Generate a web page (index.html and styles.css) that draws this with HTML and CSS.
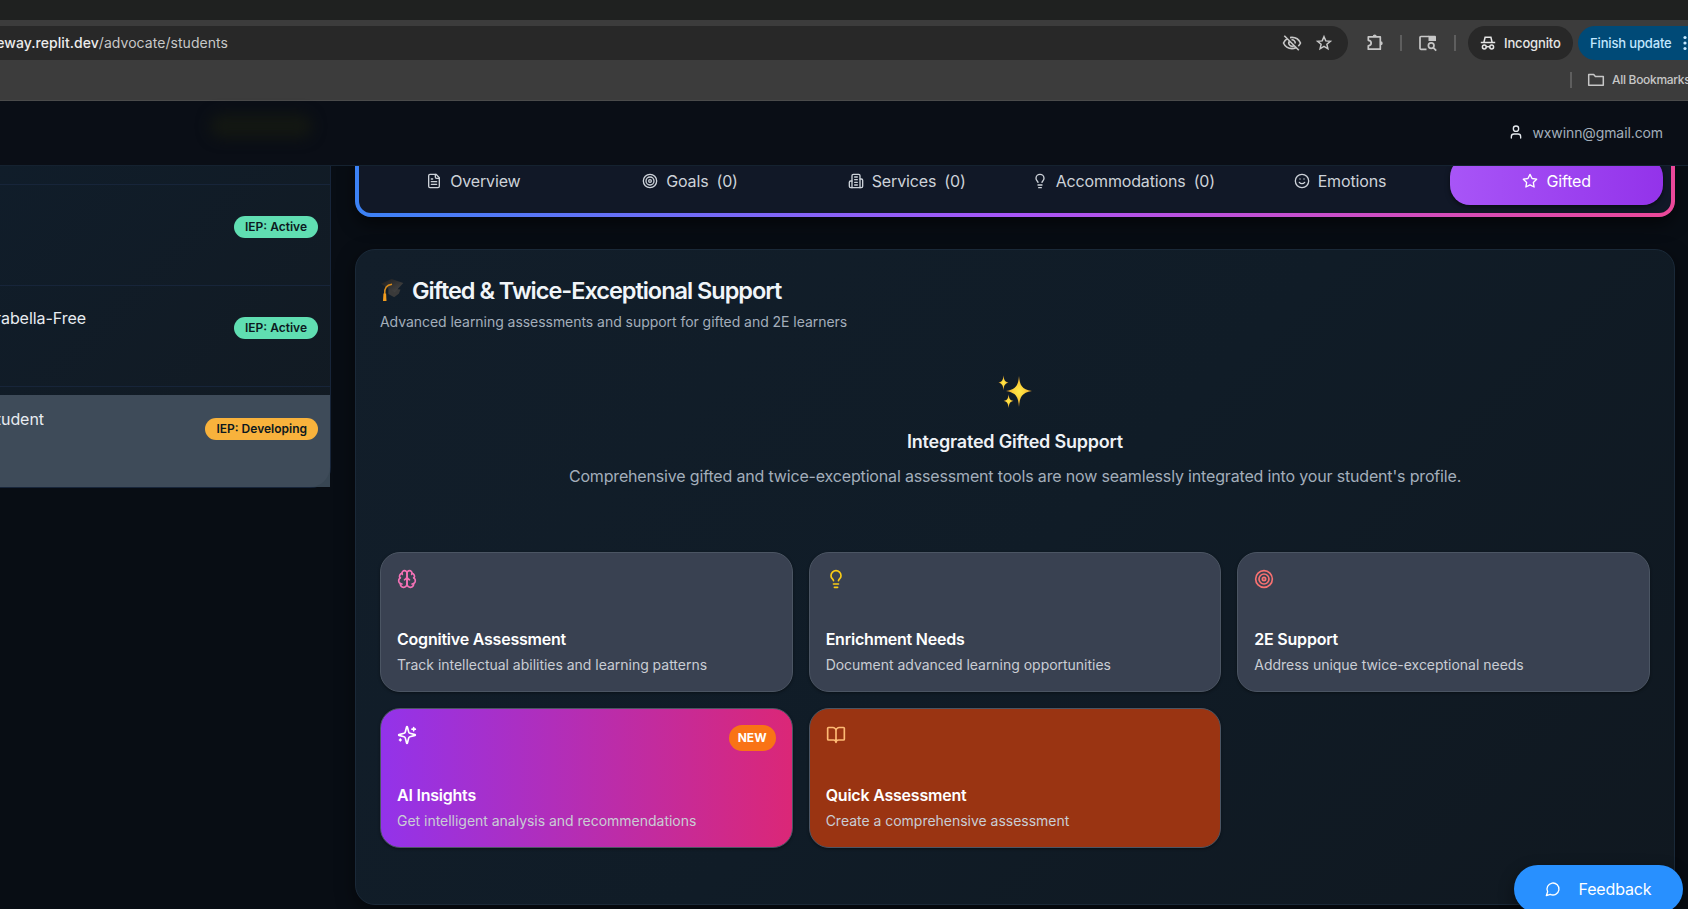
FILE: index.html
```html
<!DOCTYPE html>
<html lang="en">
<head>
<meta charset="utf-8">
<title>Students</title>
<link rel="stylesheet" href="styles.css">
</head>
<body>
<div class="tabstrip"></div>
<div class="chrome">
  <div class="toolbar">
    <div class="omnibox">
      <div class="url"><span><b>neway.replit.dev</b>/advocate/students</span></div>
      <div class="omni-icons">
        <svg width="20" height="20" viewBox="0 0 20 20" fill="none" stroke="#c7c7c7" stroke-width="1.6"><path d="M5.6 5.4C3.8 6.5 2.3 8.100 1.500 10c1.500 3.400 4.700 5.600 8.500 5.600 1.400 0 2.700-.3 3.900-.8M8 4.600c.6-.1 1.300-.2 2-.2 3.800 0 7 2.200 8.500 5.600-.5 1.200-1.200 2.200-2.200 3.100M2.300 2.700l14.500 14.500M7.400 8a3.300 3.300 0 0 0 4.600 4.600M9.500 6.800a3.300 3.300 0 0 1 3.700 3.700"/></svg>
        <svg width="18" height="18" viewBox="0 0 18 18" fill="none" stroke="#c7c7c7" stroke-width="1.500"><path d="M9 2.700l1.800 4.200 4.600.4-3.500 3 1 4.500L9 12.400l-3.900 2.400 1-4.500-3.500-3 4.600-.4z"/></svg>
      </div>
    </div>
    <svg class="puzzle" width="20" height="20" viewBox="0 0 20 20" fill="none" stroke="#c7c7c7" stroke-width="1.700"><path d="M3.300 3.900h12v12.300h-12v-3.400c2-.2 2.900-1.200 2.900-2.700S5.300 7.500 3.300 7.300z" stroke-linejoin="round"/><path d="M7.700 3.500a2 2 0 0 1 4 0zM15.700 8.200a2 2 0 0 1 0 4z" fill="#c7c7c7" stroke="none"/></svg>
    <i class="sep s1"></i>
    <svg class="tabsearch" width="20" height="20" viewBox="0 0 20 20" fill="none" stroke="#c7c7c7" stroke-width="1.700"><path d="M8.500 16.300H3a1 1 0 0 1-1-1V4.500a1 1 0 0 1 1-1h8"/><path d="M10.500 2.700H17a1 1 0 0 1 1 1v4.200h-7.500z" fill="#c7c7c7" stroke="none"/><circle cx="13.200" cy="12.600" r="2.800"/><path d="M15.200 14.600l3 3"/></svg>
    <i class="sep s2"></i>
    <div class="incog">
      <svg width="16" height="16" viewBox="0 0 16 16" fill="none" stroke="#e6e6e6" stroke-width="1.500"><path d="M.8 7.600h14.400M3.900 7.200l1.200-5h5.800l1.200 5"/><circle cx="4.300" cy="12" r="1.900"/><circle cx="11.700" cy="12" r="1.900"/><path d="M6.200 11.700h3.600"/></svg>
      <span>Incognito</span>
    </div>
    <div class="update"><span>Finish update</span><svg width="4" height="16" viewBox="0 0 4 16" fill="#c2e7ff"><circle cx="2" cy="2.500" r="1.600"/><circle cx="2" cy="8" r="1.600"/><circle cx="2" cy="13.500" r="1.600"/></svg></div>
  </div>
  <div class="bookmarks">
    <i class="sep"></i>
    <svg width="18" height="14" viewBox="0 0 18 14" fill="none" stroke="#c7c7c7" stroke-width="1.500"><path d="M1.700 1.500h5l1.700 1.900h7.900v8.900H1.700z" stroke-linejoin="round"/></svg>
    <span>All Bookmarks</span>
  </div>
</div>

<header class="apphead">
  <i class="glow"></i>
  <svg class="lc user" width="16" height="16" viewBox="0 0 24 24"><path d="M19 21v-2a4 4 0 0 0-4-4H9a4 4 0 0 0-4 4v2"/><circle cx="12" cy="7" r="4"/></svg>
  <span>wxwinn@gmail.com</span>
</header>

<div class="app">
  <aside class="side">
    <ul class="students">
      <li><div class="row"><span class="name"></span><span class="badge">IEP: Active</span></div></li>
      <li><div class="row"><span class="name n1">rabella-Free</span><span class="badge">IEP: Active</span></div></li>
      <li><div class="row on"><span class="name n2">tudent</span><span class="badge dev">IEP: Developing</span></div></li>
    </ul>
  </aside>

  <main class="main">
    <nav class="tabs"><div class="tabs-in">
      <a class="tab"><svg class="lc" width="16" height="16" viewBox="0 0 24 24"><path d="M15 2H6a2 2 0 0 0-2 2v16a2 2 0 0 0 2 2h12a2 2 0 0 0 2-2V7Z"/><path d="M14 2v4a2 2 0 0 0 2 2h4M10 9H8M16 13H8M16 17H8"/></svg><span>Overview</span></a>
      <a class="tab"><svg class="lc" width="16" height="16" viewBox="0 0 24 24"><circle cx="12" cy="12" r="10"/><circle cx="12" cy="12" r="6"/><circle cx="12" cy="12" r="2"/></svg><span>Goals</span><span>(0)</span></a>
      <a class="tab"><svg class="lc" width="16" height="16" viewBox="0 0 24 24"><path d="M6 22V4a2 2 0 0 1 2-2h8a2 2 0 0 1 2 2v18Z"/><path d="M6 12H4a2 2 0 0 0-2 2v6a2 2 0 0 0 2 2h2M18 9h2a2 2 0 0 1 2 2v9a2 2 0 0 1-2 2h-2M10 6h4M10 10h4M10 14h4M10 18h4"/></svg><span>Services</span><span>(0)</span></a>
      <a class="tab"><svg class="lc" width="16" height="16" viewBox="0 0 24 24"><path d="M15 14c.2-1 .7-1.700 1.500-2.500 1-.9 1.500-2.200 1.500-3.500A6 6 0 0 0 6 8c0 1 .2 2.200 1.500 3.500.7.7 1.300 1.500 1.500 2.500M9 18h6M10 22h4"/></svg><span>Accommodations</span><span>(0)</span></a>
      <a class="tab"><svg class="lc" width="16" height="16" viewBox="0 0 24 24"><circle cx="12" cy="12" r="10"/><path d="M8 14s1.500 2 4 2 4-2 4-2M9 9h.01M15 9h.01"/></svg><span>Emotions</span></a>
      <a class="tab active"><svg class="lc" width="16" height="16" viewBox="0 0 24 24"><path d="M12 2l3.090 6.260L22 9.270l-5 4.870 1.180 6.880L12 17.770l-6.180 3.250L7 14.140 2 9.270l6.910-1.010z"/></svg><span>Gifted</span></a>
    </div></nav>

    <section class="panel">
      <h2><svg width="24" height="24" viewBox="0 0 24 24"><defs><linearGradient id="cap" x1="0" y1="0" x2="1" y2="1"><stop offset="0" stop-color="#1d1d1d"/><stop offset="1" stop-color="#4a4a4a"/></linearGradient></defs><path d="M8.500 10l12 1.500-1.700 4.300-4.600 3.400-5.900-3.200z" fill="#3a3a3a"/><path d="M1 5.800L11.500 1 23.300 4.900 14.700 14.200z" fill="url(#cap)"/><path d="M12 6.300C6.500 7.200 4.500 9.500 4.700 16" fill="none" stroke="#d98c1c" stroke-width="1.500"/><path d="M3.500 15.500h2.600l.4 7.500H3z" fill="#f29d1f"/></svg><span>Gifted &amp; Twice-Exceptional Support</span></h2>
      <p class="sub">Advanced learning assessments and support for gifted and 2E learners</p>
      <div class="intro">
        <svg width="36" height="36" viewBox="0 0 36 36"><defs><radialGradient id="sp"><stop offset="0" stop-color="#ffe94a"/><stop offset=".45" stop-color="#fdd23a"/><stop offset="1" stop-color="#e39a2c"/></radialGradient></defs><g fill="url(#sp)"><path d="M22 2c.9 9.500 2.600 13 13 15-10.400 2-12.100 5.500-13 16-.9-10.500-2.600-14-13-16 10.400-2 12.100-5.500 13-15z"/><path d="M6.500 1.300c.5 5 1.300 6.600 5 7.400-3.700.8-4.500 2.400-5 7.500-.5-5.100-1.300-6.700-5-7.500 3.700-.8 4.500-2.400 5-7.400z"/><path d="M11.600 20.300c.5 4.500 1.300 5.900 5 6.700-3.700.8-4.500 2.300-5 7-.5-4.700-1.300-6.200-5-7 3.700-.8 4.500-2.200 5-6.700z"/></g></svg>
        <h3>Integrated Gifted Support</h3>
        <p>Comprehensive gifted and twice-exceptional assessment tools are now seamlessly integrated into your student's profile.</p>
      </div>
      <div class="grid">
        <article class="card"><svg class="lc pink" width="20" height="20" viewBox="0 0 24 24"><path d="M12 5a3 3 0 1 0-5.997.125 4 4 0 0 0-2.526 5.770 4 4 0 0 0 .556 6.588A4 4 0 1 0 12 18Z"/><path d="M12 5a3 3 0 1 1 5.997.125 4 4 0 0 1 2.526 5.770 4 4 0 0 1-.556 6.588A4 4 0 1 1 12 18Z"/><path d="M15 13a4.500 4.500 0 0 1-3-4 4.500 4.500 0 0 1-3 4M17.599 6.500a3 3 0 0 0 .399-1.375M6.003 5.125A3 3 0 0 0 6.401 6.500M3.477 10.896a4 4 0 0 1 .585-.396M19.938 10.500a4 4 0 0 1 .585.396M6 18a4 4 0 0 1-1.967-.516M19.967 17.484A4 4 0 0 1 18 18"/></svg><h4>Cognitive Assessment</h4><p>Track intellectual abilities and learning patterns</p></article>
        <article class="card"><svg class="lc yellow" width="20" height="20" viewBox="0 0 24 24"><path d="M15 14c.2-1 .7-1.700 1.500-2.500 1-.9 1.500-2.200 1.500-3.500A6 6 0 0 0 6 8c0 1 .2 2.200 1.500 3.500.7.7 1.300 1.500 1.500 2.500M9 18h6M10 22h4"/></svg><h4>Enrichment Needs</h4><p>Document advanced learning opportunities</p></article>
        <article class="card"><svg class="lc red" width="20" height="20" viewBox="0 0 24 24"><circle cx="12" cy="12" r="10"/><circle cx="12" cy="12" r="6"/><circle cx="12" cy="12" r="2"/></svg><h4>2E Support</h4><p>Address unique twice-exceptional needs</p></article>
        <article class="card ai"><svg class="lc white" width="20" height="20" viewBox="0 0 24 24"><path d="M9.937 15.500A2 2 0 0 0 8.500 14.063l-6.135-1.582a.5.5 0 0 1 0-.962L8.500 9.936A2 2 0 0 0 9.937 8.500l1.582-6.135a.5.5 0 0 1 .963 0L14.063 8.500A2 2 0 0 0 15.500 9.937l6.135 1.581a.5.5 0 0 1 0 .964L15.500 14.063a2 2 0 0 0-1.437 1.437l-1.582 6.135a.5.5 0 0 1-.963 0zM20 3v4M22 5h-4M4 17v2M5 18H3"/></svg><span class="new">NEW</span><h4>AI Insights</h4><p>Get intelligent analysis and recommendations</p></article>
        <article class="card quick"><svg class="lc peach" width="20" height="20" viewBox="0 0 24 24"><path d="M12 7v14M3 18a1 1 0 0 1-1-1V4a1 1 0 0 1 1-1h5a4 4 0 0 1 4 4 4 4 0 0 1 4-4h5a1 1 0 0 1 1 1v13a1 1 0 0 1-1 1h-6a3 3 0 0 0-3 3 3 3 0 0 0-3-3z"/></svg><h4>Quick Assessment</h4><p>Create a comprehensive assessment</p></article>
      </div>
    </section>
  </main>
</div>
<button class="feedback"><svg class="lc" width="16" height="16" viewBox="0 0 24 24"><path d="M7.900 20A9 9 0 1 0 4 16.100L2 22Z"/></svg><span>Feedback</span></button>
</body>
</html>
```
FILE: styles.css
```css
* { box-sizing: border-box; margin: 0; padding: 0; }
body { width: 1688px; height: 909px; overflow: hidden; background: #080d14; color: #f1f5f9; font-family: Inter, "Liberation Sans", sans-serif; font-size: 16px; display: flex; flex-direction: column; }
svg { display: block; flex: none; }
.lc { fill: none; stroke: currentColor; stroke-width: 2; stroke-linecap: round; stroke-linejoin: round; }

.tabstrip { height: 20px; background: #1f2120; flex: none; }
.chrome { height: 81px; background: #3c3c3c; border-bottom: 1px solid #4b4b4b; flex: none; padding-top: 6px; overflow: hidden; white-space: nowrap; }
.toolbar { display: flex; align-items: center; height: 34px; }
.omnibox { width: 1348px; height: 34px; flex: none; border-radius: 0 17px 17px 0; background: #282828; display: flex; align-items: center; justify-content: space-between; padding-right: 15px; }
.url { width: 228px; display: flex; justify-content: flex-end; overflow: hidden; font-size: 14px; line-height: 20px; letter-spacing: .05px; color: #c7c7c7; }
.url b { font-weight: 500; color: #ececec; }
.omni-icons { display: flex; align-items: center; gap: 13px; }
.puzzle { margin-left: 17px; }
.sep { width: 2px; height: 16px; background: #5e5e5e; flex: none; }
.s1 { margin-left: 15px; }
.tabsearch { margin-left: 16px; }
.s2 { margin-left: 16px; }
.incog { margin-left: 12px; width: 105px; height: 34px; border-radius: 17px; background: #282828; display: flex; align-items: center; gap: 8px; padding-left: 12px; font-size: 13px; font-weight: 500; letter-spacing: -.15px; color: #e6e6e6; flex: none; }
.update { margin-left: 5px; width: 140px; height: 34px; border-radius: 17px; background: #004a77; display: flex; align-items: center; gap: 11px; padding-left: 12px; font-size: 13px; font-weight: 500; letter-spacing: -.15px; color: #c2e7ff; flex: none; }
.bookmarks { display: flex; align-items: center; height: 40px; padding-left: 1570px; font-size: 12px; font-weight: 500; letter-spacing: -.3px; color: #c7c7c7; }
.bookmarks span { margin-top: -1px; }
.bookmarks svg { margin: 0 7px 0 15px; }

.apphead { position: relative; height: 65px; flex: none; background: #0a0e16; border-bottom: 1px solid #152230; display: flex; align-items: center; justify-content: flex-end; gap: 8px; padding: 0 25px 2px 0; font-size: 14px; letter-spacing: -.1px; color: #a3aebb; }
.glow { position: absolute; left: 210px; top: 13px; width: 102px; height: 24px; border-radius: 12px; background: #131712; filter: blur(7px); }
.user { color: #e5e9ee; }

.app { height: 743px; display: flex; overflow: hidden; background: #080d14; }
.side { width: 331px; height: 322px; flex: none; background: linear-gradient(135deg, #101d2a, #121a22); border-right: 1px solid #17253a; border-bottom: 1px solid #17253a; border-radius: 0 0 20px 0; }
.students { list-style: none; margin-top: 18px; }
.students li { border-top: 1px solid #17253a; padding-top: 8px; }
.row { height: 92px; display: flex; justify-content: space-between; padding-right: 12px; }
.row.on { position: relative; z-index: 0; background: #384653; }
.row.on::before { content: ""; position: absolute; inset: 0; z-index: -1; border-radius: 0 0 20px 0; background: #3e4b59; }
.name { width: 86px; padding-top: 12px; display: flex; justify-content: flex-end; overflow: hidden; line-height: 24px; height: 40px; white-space: nowrap; letter-spacing: -.05px; color: #e8ecf1; }
.n2 { width: 44px; }
.badge { margin-top: 23px; height: 22px; padding: 0 11px; border-radius: 11px; background: #60deb2; color: #0c1820; font-size: 12px; line-height: 21px; font-weight: 600; }
.dev { background: #f8b23c; }

.main { flex: 1; padding: 0 13px 0 24px; }
.tabs { margin-top: -21px; height: 72px; padding: 4px; border-radius: 16px; background: linear-gradient(90deg, #3b82f6, #a855f7 50%, #ec4899); box-shadow: 0 8px 16px rgba(0,0,0,.5); }
.tabs-in { height: 64px; border-radius: 12px; padding: 8px; background: #111827; display: grid; grid-template-columns: repeat(6, 1fr); gap: 4px; }
.tab { height: 48px; border-radius: 20px; display: flex; align-items: center; justify-content: center; gap: 8px; letter-spacing: -.14px; color: #cdd2d9; white-space: nowrap; }
.tab.active { color: #fff; background: linear-gradient(90deg, #a855f7, #9333ea); box-shadow: 0 2px 5px rgba(0,0,0,.5); }
.panel { margin-top: 32px; height: 656px; border: 1px solid #1a2938; border-radius: 20px; padding: 24px; background: linear-gradient(135deg, #121e2a, #101c27 50%, #101820); box-shadow: 0 6px 18px rgba(0,0,0,.5); }
h2 { display: flex; align-items: center; gap: 8px; height: 32px; font-size: 23.5px; letter-spacing: -1.02px; font-weight: 600; white-space: nowrap; }
.sub { margin-top: 6px; font-size: 14px; line-height: 20px; letter-spacing: -.045px; color: #a3aebb; }
.intro { margin-top: 42px; height: 178px; display: flex; flex-direction: column; align-items: center; }
.intro h3 { margin-top: 18px; font-size: 18px; line-height: 28px; letter-spacing: -.2px; font-weight: 600; color: #eef1f5; }
.intro p { margin-top: 8px; line-height: 24px; letter-spacing: -.165px; color: #a3aebb; white-space: nowrap; }
.grid { display: grid; grid-template-columns: repeat(3, 1fr); gap: 16px; }
.card { height: 140px; border: 1px solid #4b5563; border-radius: 20px; padding: 16px; background: #394151; position: relative; box-shadow: 0 1px 3px rgba(0,0,0,.4); }
.card h4 { margin-top: 38px; font-size: 16px; line-height: 24px; letter-spacing: -.22px; font-weight: 600; color: #fff; }
.card p { margin-top: 4px; font-size: 14px; line-height: 20px; letter-spacing: -.02px; color: #c9cdd4; white-space: nowrap; }
.ai { background: linear-gradient(90deg, #9333ea, #db2777); }
.quick { background: #9a3412; }
.new { position: absolute; top: 16px; right: 16px; width: 47px; height: 26px; border-radius: 13px; background: #f97316; color: #fff; font-size: 12px; line-height: 26px; font-weight: 700; text-align: center; }
.pink { color: #f472b6; }
.yellow { color: #facc15; }
.red { color: #f87171; }
.white { color: #fff; }
.peach { color: #fdba74; }
.feedback { position: absolute; left: 1514px; top: 865px; width: 169px; height: 48px; border: 0; border-radius: 24px; background: #2890ff; color: #fff; font: 400 16px Inter, "Liberation Sans", sans-serif; letter-spacing: -.14px; display: flex; align-items: center; justify-content: center; gap: 17px; box-shadow: 0 6px 16px rgba(0,0,0,.45); }
```
